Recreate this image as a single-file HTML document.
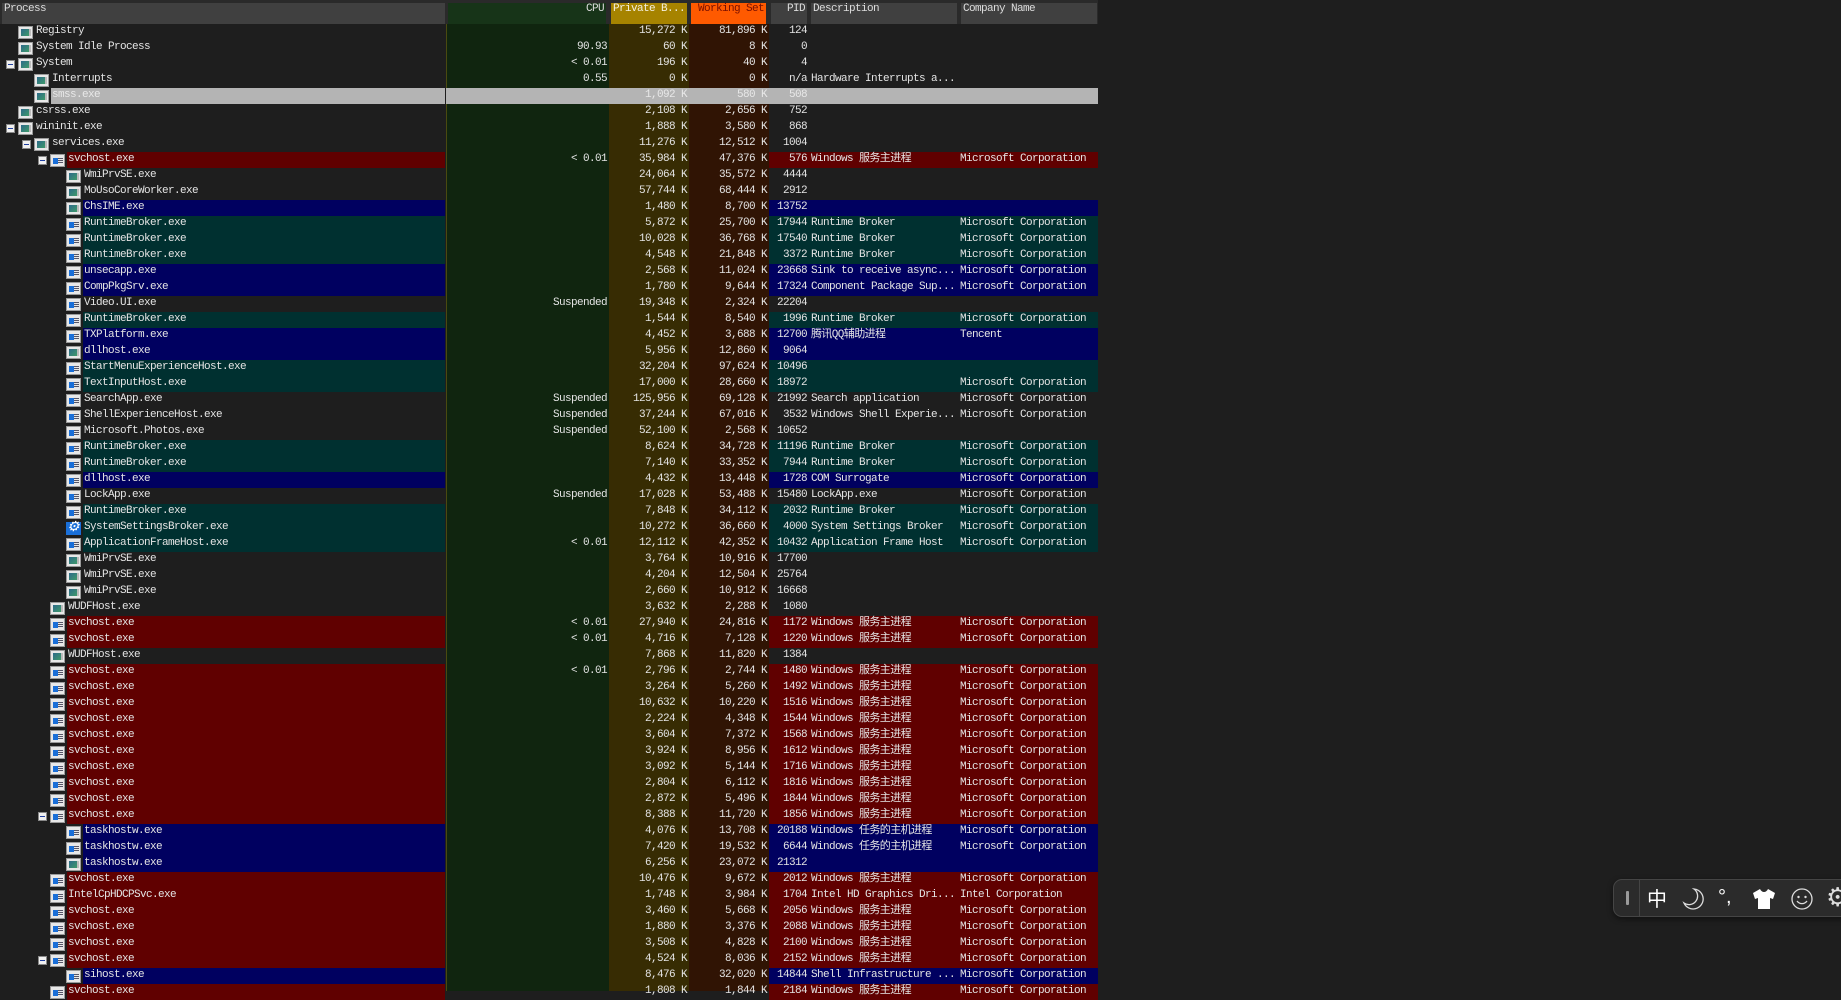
<!DOCTYPE html>
<html><head><meta charset="utf-8">
<style>
*{margin:0;padding:0;box-sizing:border-box}
body{width:1841px;height:991px;background:#1e1e1e;overflow:hidden;position:relative;font-family:"Liberation Mono","Noto Sans CJK SC",monospace;font-size:11px;letter-spacing:-0.6px;color:#e4e4e4}
.col{position:absolute;top:24px;height:967px}
.h{position:absolute;top:3px;height:21px;background:#404040;line-height:11px;padding:1px 2px;color:#ddd;white-space:nowrap;overflow:hidden}
.r{position:absolute;left:0;width:1098px;height:16px;line-height:14px;white-space:nowrap}
.r span{position:absolute;top:0;height:16px}
.p{right:653px}
.d0 .p{left:35px}.d1 .p{left:51px}.d2 .p{left:67px}.d3 .p{left:83px}
.p{padding-left:1px}
.ic{position:absolute;left:-17px;top:2px;width:15px;height:13px;background:#e8e8e8;border:1px solid #9a9a9a}
.ic::after{content:"";position:absolute;left:2px;top:2px;width:8px;height:7px;background:linear-gradient(135deg,#2d6a8a,#3f9a6a)}
.ic::before{content:"";position:absolute;right:1px;top:2px;width:2px;height:7px;background:#bbb}
.w::after{left:2px;top:3px;width:5px;height:6px;background:#1a6fd8}
.w::before{right:1px;top:3px;width:5px;height:6px;background:repeating-linear-gradient(#556 0 1px,transparent 1px 2px)}
.g{background:#1a6fd8;border-color:#1a6fd8}
.g::after{content:"⚙";background:none;color:#fff;left:0;top:-2px;font-size:14px;width:auto;height:auto;letter-spacing:0}
.g::before{display:none}
.ex{position:absolute;left:-29px;top:4px;width:9px;height:9px;background:#f0f0f0;border:1px solid #888}
.ex::after{content:"";position:absolute;left:1px;top:3px;width:5px;height:1px;background:#2040a0}
.c{left:447px;width:160px;text-align:right}
.pb{left:609px;width:78px;text-align:right}
.ws{left:689px;width:78px;text-align:right}
.pid{left:769px;width:38px;text-align:right}
.ds{left:811px}
.co{left:960px}
.red .p,.red .x{background:#600000}
.blue .p,.blue .x{background:#000060}
.teal .p,.teal .x{background:#003030}
.x{position:absolute;left:769px;width:329px;height:16px;top:0}
.sel .p,.sel .x{background:#b4b4b4}
.sel .x{left:446px;width:652px}
.sel{color:#e8e8e8}
</style></head><body>
<div class="col" style="left:446px;width:1px;background:#4a4a10"></div>
<div class="col" style="left:447px;width:162px;background:#10250f"></div>
<div class="col" style="left:609px;width:80px;background:#372c03"></div>
<div class="col" style="left:689px;width:80px;background:#301404"></div>
<div style="position:absolute;left:0;top:0;width:1098px;height:24px;background:#2a2a2a"></div>
<div class="h" style="left:2px;width:443px">Process</div>
<div class="h" style="left:448px;width:158px;background:#173418;text-align:right">CPU</div>
<div class="h" style="left:611px;width:76px;background:#a68300;color:#f4f0e0">Private B...</div>
<div class="h" style="left:691px;width:75px;background:#ff5a00;color:#7a1000;text-align:right">Working Set</div>
<div class="h" style="left:771px;width:36px;text-align:right">PID</div>
<div class="h" style="left:811px;width:146px">Description</div>
<div class="h" style="left:961px;width:136px">Company Name</div>

<div class="r d0" style="top:24px"><span class="p"><i class="ic"></i>Registry</span><span class="pb">15,272 K</span><span class="ws">81,896 K</span><span class="pid">124</span></div>
<div class="r d0" style="top:40px"><span class="p"><i class="ic"></i>System Idle Process</span><span class="c">90.93</span><span class="pb">60 K</span><span class="ws">8 K</span><span class="pid">0</span></div>
<div class="r d0" style="top:56px"><span class="p"><i class="ex"></i><i class="ic"></i>System</span><span class="c">&lt; 0.01</span><span class="pb">196 K</span><span class="ws">40 K</span><span class="pid">4</span></div>
<div class="r d1" style="top:72px"><span class="p"><i class="ic"></i>Interrupts</span><span class="c">0.55</span><span class="pb">0 K</span><span class="ws">0 K</span><span class="pid">n/a</span><span class="ds">Hardware Interrupts a...</span></div>
<div class="r d1 sel" style="top:88px"><i class="x"></i><span class="p"><i class="ic"></i>smss.exe</span><span class="pb">1,092 K</span><span class="ws">580 K</span><span class="pid">508</span></div>
<div class="r d0" style="top:104px"><span class="p"><i class="ic"></i>csrss.exe</span><span class="pb">2,108 K</span><span class="ws">2,656 K</span><span class="pid">752</span></div>
<div class="r d0" style="top:120px"><span class="p"><i class="ex"></i><i class="ic"></i>wininit.exe</span><span class="pb">1,888 K</span><span class="ws">3,580 K</span><span class="pid">868</span></div>
<div class="r d1" style="top:136px"><span class="p"><i class="ex"></i><i class="ic"></i>services.exe</span><span class="pb">11,276 K</span><span class="ws">12,512 K</span><span class="pid">1004</span></div>
<div class="r d2 red" style="top:152px"><i class="x"></i><span class="p"><i class="ex"></i><i class="ic w"></i>svchost.exe</span><span class="c">&lt; 0.01</span><span class="pb">35,984 K</span><span class="ws">47,376 K</span><span class="pid">576</span><span class="ds">Windows 服务主进程</span><span class="co">Microsoft Corporation</span></div>
<div class="r d3" style="top:168px"><span class="p"><i class="ic"></i>WmiPrvSE.exe</span><span class="pb">24,064 K</span><span class="ws">35,572 K</span><span class="pid">4444</span></div>
<div class="r d3" style="top:184px"><span class="p"><i class="ic"></i>MoUsoCoreWorker.exe</span><span class="pb">57,744 K</span><span class="ws">68,444 K</span><span class="pid">2912</span></div>
<div class="r d3 blue" style="top:200px"><i class="x"></i><span class="p"><i class="ic"></i>ChsIME.exe</span><span class="pb">1,480 K</span><span class="ws">8,700 K</span><span class="pid">13752</span></div>
<div class="r d3 teal" style="top:216px"><i class="x"></i><span class="p"><i class="ic w"></i>RuntimeBroker.exe</span><span class="pb">5,872 K</span><span class="ws">25,700 K</span><span class="pid">17944</span><span class="ds">Runtime Broker</span><span class="co">Microsoft Corporation</span></div>
<div class="r d3 teal" style="top:232px"><i class="x"></i><span class="p"><i class="ic w"></i>RuntimeBroker.exe</span><span class="pb">10,028 K</span><span class="ws">36,768 K</span><span class="pid">17540</span><span class="ds">Runtime Broker</span><span class="co">Microsoft Corporation</span></div>
<div class="r d3 teal" style="top:248px"><i class="x"></i><span class="p"><i class="ic w"></i>RuntimeBroker.exe</span><span class="pb">4,548 K</span><span class="ws">21,848 K</span><span class="pid">3372</span><span class="ds">Runtime Broker</span><span class="co">Microsoft Corporation</span></div>
<div class="r d3 blue" style="top:264px"><i class="x"></i><span class="p"><i class="ic w"></i>unsecapp.exe</span><span class="pb">2,568 K</span><span class="ws">11,024 K</span><span class="pid">23668</span><span class="ds">Sink to receive async...</span><span class="co">Microsoft Corporation</span></div>
<div class="r d3 blue" style="top:280px"><i class="x"></i><span class="p"><i class="ic w"></i>CompPkgSrv.exe</span><span class="pb">1,780 K</span><span class="ws">9,644 K</span><span class="pid">17324</span><span class="ds">Component Package Sup...</span><span class="co">Microsoft Corporation</span></div>
<div class="r d3" style="top:296px"><span class="p"><i class="ic w"></i>Video.UI.exe</span><span class="c">Suspended</span><span class="pb">19,348 K</span><span class="ws">2,324 K</span><span class="pid">22204</span></div>
<div class="r d3 teal" style="top:312px"><i class="x"></i><span class="p"><i class="ic w"></i>RuntimeBroker.exe</span><span class="pb">1,544 K</span><span class="ws">8,540 K</span><span class="pid">1996</span><span class="ds">Runtime Broker</span><span class="co">Microsoft Corporation</span></div>
<div class="r d3 blue" style="top:328px"><i class="x"></i><span class="p"><i class="ic w"></i>TXPlatform.exe</span><span class="pb">4,452 K</span><span class="ws">3,688 K</span><span class="pid">12700</span><span class="ds">腾讯QQ辅助进程</span><span class="co">Tencent</span></div>
<div class="r d3 blue" style="top:344px"><i class="x"></i><span class="p"><i class="ic"></i>dllhost.exe</span><span class="pb">5,956 K</span><span class="ws">12,860 K</span><span class="pid">9064</span></div>
<div class="r d3 teal" style="top:360px"><i class="x"></i><span class="p"><i class="ic w"></i>StartMenuExperienceHost.exe</span><span class="pb">32,204 K</span><span class="ws">97,624 K</span><span class="pid">10496</span></div>
<div class="r d3 teal" style="top:376px"><i class="x"></i><span class="p"><i class="ic w"></i>TextInputHost.exe</span><span class="pb">17,000 K</span><span class="ws">28,660 K</span><span class="pid">18972</span><span class="co">Microsoft Corporation</span></div>
<div class="r d3" style="top:392px"><span class="p"><i class="ic w"></i>SearchApp.exe</span><span class="c">Suspended</span><span class="pb">125,956 K</span><span class="ws">69,128 K</span><span class="pid">21992</span><span class="ds">Search application</span><span class="co">Microsoft Corporation</span></div>
<div class="r d3" style="top:408px"><span class="p"><i class="ic w"></i>ShellExperienceHost.exe</span><span class="c">Suspended</span><span class="pb">37,244 K</span><span class="ws">67,016 K</span><span class="pid">3532</span><span class="ds">Windows Shell Experie...</span><span class="co">Microsoft Corporation</span></div>
<div class="r d3" style="top:424px"><span class="p"><i class="ic w"></i>Microsoft.Photos.exe</span><span class="c">Suspended</span><span class="pb">52,100 K</span><span class="ws">2,568 K</span><span class="pid">10652</span></div>
<div class="r d3 teal" style="top:440px"><i class="x"></i><span class="p"><i class="ic w"></i>RuntimeBroker.exe</span><span class="pb">8,624 K</span><span class="ws">34,728 K</span><span class="pid">11196</span><span class="ds">Runtime Broker</span><span class="co">Microsoft Corporation</span></div>
<div class="r d3 teal" style="top:456px"><i class="x"></i><span class="p"><i class="ic w"></i>RuntimeBroker.exe</span><span class="pb">7,140 K</span><span class="ws">33,352 K</span><span class="pid">7944</span><span class="ds">Runtime Broker</span><span class="co">Microsoft Corporation</span></div>
<div class="r d3 blue" style="top:472px"><i class="x"></i><span class="p"><i class="ic w"></i>dllhost.exe</span><span class="pb">4,432 K</span><span class="ws">13,448 K</span><span class="pid">1728</span><span class="ds">COM Surrogate</span><span class="co">Microsoft Corporation</span></div>
<div class="r d3" style="top:488px"><span class="p"><i class="ic w"></i>LockApp.exe</span><span class="c">Suspended</span><span class="pb">17,028 K</span><span class="ws">53,488 K</span><span class="pid">15480</span><span class="ds">LockApp.exe</span><span class="co">Microsoft Corporation</span></div>
<div class="r d3 teal" style="top:504px"><i class="x"></i><span class="p"><i class="ic w"></i>RuntimeBroker.exe</span><span class="pb">7,848 K</span><span class="ws">34,112 K</span><span class="pid">2032</span><span class="ds">Runtime Broker</span><span class="co">Microsoft Corporation</span></div>
<div class="r d3 teal" style="top:520px"><i class="x"></i><span class="p"><i class="ic g"></i>SystemSettingsBroker.exe</span><span class="pb">10,272 K</span><span class="ws">36,660 K</span><span class="pid">4000</span><span class="ds">System Settings Broker</span><span class="co">Microsoft Corporation</span></div>
<div class="r d3 teal" style="top:536px"><i class="x"></i><span class="p"><i class="ic w"></i>ApplicationFrameHost.exe</span><span class="c">&lt; 0.01</span><span class="pb">12,112 K</span><span class="ws">42,352 K</span><span class="pid">10432</span><span class="ds">Application Frame Host</span><span class="co">Microsoft Corporation</span></div>
<div class="r d3" style="top:552px"><span class="p"><i class="ic"></i>WmiPrvSE.exe</span><span class="pb">3,764 K</span><span class="ws">10,916 K</span><span class="pid">17700</span></div>
<div class="r d3" style="top:568px"><span class="p"><i class="ic"></i>WmiPrvSE.exe</span><span class="pb">4,204 K</span><span class="ws">12,504 K</span><span class="pid">25764</span></div>
<div class="r d3" style="top:584px"><span class="p"><i class="ic"></i>WmiPrvSE.exe</span><span class="pb">2,660 K</span><span class="ws">10,912 K</span><span class="pid">16668</span></div>
<div class="r d2" style="top:600px"><span class="p"><i class="ic"></i>WUDFHost.exe</span><span class="pb">3,632 K</span><span class="ws">2,288 K</span><span class="pid">1080</span></div>
<div class="r d2 red" style="top:616px"><i class="x"></i><span class="p"><i class="ic w"></i>svchost.exe</span><span class="c">&lt; 0.01</span><span class="pb">27,940 K</span><span class="ws">24,816 K</span><span class="pid">1172</span><span class="ds">Windows 服务主进程</span><span class="co">Microsoft Corporation</span></div>
<div class="r d2 red" style="top:632px"><i class="x"></i><span class="p"><i class="ic w"></i>svchost.exe</span><span class="c">&lt; 0.01</span><span class="pb">4,716 K</span><span class="ws">7,128 K</span><span class="pid">1220</span><span class="ds">Windows 服务主进程</span><span class="co">Microsoft Corporation</span></div>
<div class="r d2" style="top:648px"><span class="p"><i class="ic"></i>WUDFHost.exe</span><span class="pb">7,868 K</span><span class="ws">11,820 K</span><span class="pid">1384</span></div>
<div class="r d2 red" style="top:664px"><i class="x"></i><span class="p"><i class="ic w"></i>svchost.exe</span><span class="c">&lt; 0.01</span><span class="pb">2,796 K</span><span class="ws">2,744 K</span><span class="pid">1480</span><span class="ds">Windows 服务主进程</span><span class="co">Microsoft Corporation</span></div>
<div class="r d2 red" style="top:680px"><i class="x"></i><span class="p"><i class="ic w"></i>svchost.exe</span><span class="pb">3,264 K</span><span class="ws">5,260 K</span><span class="pid">1492</span><span class="ds">Windows 服务主进程</span><span class="co">Microsoft Corporation</span></div>
<div class="r d2 red" style="top:696px"><i class="x"></i><span class="p"><i class="ic w"></i>svchost.exe</span><span class="pb">10,632 K</span><span class="ws">10,220 K</span><span class="pid">1516</span><span class="ds">Windows 服务主进程</span><span class="co">Microsoft Corporation</span></div>
<div class="r d2 red" style="top:712px"><i class="x"></i><span class="p"><i class="ic w"></i>svchost.exe</span><span class="pb">2,224 K</span><span class="ws">4,348 K</span><span class="pid">1544</span><span class="ds">Windows 服务主进程</span><span class="co">Microsoft Corporation</span></div>
<div class="r d2 red" style="top:728px"><i class="x"></i><span class="p"><i class="ic w"></i>svchost.exe</span><span class="pb">3,604 K</span><span class="ws">7,372 K</span><span class="pid">1568</span><span class="ds">Windows 服务主进程</span><span class="co">Microsoft Corporation</span></div>
<div class="r d2 red" style="top:744px"><i class="x"></i><span class="p"><i class="ic w"></i>svchost.exe</span><span class="pb">3,924 K</span><span class="ws">8,956 K</span><span class="pid">1612</span><span class="ds">Windows 服务主进程</span><span class="co">Microsoft Corporation</span></div>
<div class="r d2 red" style="top:760px"><i class="x"></i><span class="p"><i class="ic w"></i>svchost.exe</span><span class="pb">3,092 K</span><span class="ws">5,144 K</span><span class="pid">1716</span><span class="ds">Windows 服务主进程</span><span class="co">Microsoft Corporation</span></div>
<div class="r d2 red" style="top:776px"><i class="x"></i><span class="p"><i class="ic w"></i>svchost.exe</span><span class="pb">2,804 K</span><span class="ws">6,112 K</span><span class="pid">1816</span><span class="ds">Windows 服务主进程</span><span class="co">Microsoft Corporation</span></div>
<div class="r d2 red" style="top:792px"><i class="x"></i><span class="p"><i class="ic w"></i>svchost.exe</span><span class="pb">2,872 K</span><span class="ws">5,496 K</span><span class="pid">1844</span><span class="ds">Windows 服务主进程</span><span class="co">Microsoft Corporation</span></div>
<div class="r d2 red" style="top:808px"><i class="x"></i><span class="p"><i class="ex"></i><i class="ic w"></i>svchost.exe</span><span class="pb">8,388 K</span><span class="ws">11,720 K</span><span class="pid">1856</span><span class="ds">Windows 服务主进程</span><span class="co">Microsoft Corporation</span></div>
<div class="r d3 blue" style="top:824px"><i class="x"></i><span class="p"><i class="ic w"></i>taskhostw.exe</span><span class="pb">4,076 K</span><span class="ws">13,708 K</span><span class="pid">20188</span><span class="ds">Windows 任务的主机进程</span><span class="co">Microsoft Corporation</span></div>
<div class="r d3 blue" style="top:840px"><i class="x"></i><span class="p"><i class="ic w"></i>taskhostw.exe</span><span class="pb">7,420 K</span><span class="ws">19,532 K</span><span class="pid">6644</span><span class="ds">Windows 任务的主机进程</span><span class="co">Microsoft Corporation</span></div>
<div class="r d3 blue" style="top:856px"><i class="x"></i><span class="p"><i class="ic"></i>taskhostw.exe</span><span class="pb">6,256 K</span><span class="ws">23,072 K</span><span class="pid">21312</span></div>
<div class="r d2 red" style="top:872px"><i class="x"></i><span class="p"><i class="ic w"></i>svchost.exe</span><span class="pb">10,476 K</span><span class="ws">9,672 K</span><span class="pid">2012</span><span class="ds">Windows 服务主进程</span><span class="co">Microsoft Corporation</span></div>
<div class="r d2 red" style="top:888px"><i class="x"></i><span class="p"><i class="ic w"></i>IntelCpHDCPSvc.exe</span><span class="pb">1,748 K</span><span class="ws">3,984 K</span><span class="pid">1704</span><span class="ds">Intel HD Graphics Dri...</span><span class="co">Intel Corporation</span></div>
<div class="r d2 red" style="top:904px"><i class="x"></i><span class="p"><i class="ic w"></i>svchost.exe</span><span class="pb">3,460 K</span><span class="ws">5,668 K</span><span class="pid">2056</span><span class="ds">Windows 服务主进程</span><span class="co">Microsoft Corporation</span></div>
<div class="r d2 red" style="top:920px"><i class="x"></i><span class="p"><i class="ic w"></i>svchost.exe</span><span class="pb">1,880 K</span><span class="ws">3,376 K</span><span class="pid">2088</span><span class="ds">Windows 服务主进程</span><span class="co">Microsoft Corporation</span></div>
<div class="r d2 red" style="top:936px"><i class="x"></i><span class="p"><i class="ic w"></i>svchost.exe</span><span class="pb">3,508 K</span><span class="ws">4,828 K</span><span class="pid">2100</span><span class="ds">Windows 服务主进程</span><span class="co">Microsoft Corporation</span></div>
<div class="r d2 red" style="top:952px"><i class="x"></i><span class="p"><i class="ex"></i><i class="ic w"></i>svchost.exe</span><span class="pb">4,524 K</span><span class="ws">8,036 K</span><span class="pid">2152</span><span class="ds">Windows 服务主进程</span><span class="co">Microsoft Corporation</span></div>
<div class="r d3 blue" style="top:968px"><i class="x"></i><span class="p"><i class="ic w"></i>sihost.exe</span><span class="pb">8,476 K</span><span class="ws">32,020 K</span><span class="pid">14844</span><span class="ds">Shell Infrastructure ...</span><span class="co">Microsoft Corporation</span></div>
<div class="r d2 red" style="top:984px"><i class="x"></i><span class="p"><i class="ic w"></i>svchost.exe</span><span class="pb">1,808 K</span><span class="ws">1,844 K</span><span class="pid">2184</span><span class="ds">Windows 服务主进程</span><span class="co">Microsoft Corporation</span></div>

<div style="position:absolute;left:1613px;top:879px;width:240px;height:38px;background:#2b2b2b;border:1px solid #454545;border-radius:9px;box-shadow:0 2px 6px rgba(0,0,0,.5)">
 <div style="position:absolute;left:12px;top:11px;width:3px;height:14px;background:#9a9a9a;border-radius:1px"></div>
 <div style="position:absolute;left:25px;top:0;width:1px;height:36px;background:#454545"></div>
 <div style="position:absolute;left:33px;top:5px;color:#fff;font-family:'Noto Sans CJK SC',sans-serif;font-size:20px;letter-spacing:0;line-height:26px">中</div>
 <svg style="position:absolute;left:68px;top:7px" width="24" height="24" viewBox="0 0 24 24"><path d="M12 2a10 10 0 1 1-10 14A8 8 0 0 0 12 2z" fill="none" stroke="#ddd" stroke-width="1.3"/></svg>
 <div style="position:absolute;left:104px;top:4px;color:#fff;font-size:20px;letter-spacing:0;line-height:26px;font-family:'Liberation Sans',sans-serif">°,</div>
 <svg style="position:absolute;left:138px;top:8px" width="24" height="22" viewBox="0 0 24 22"><path d="M8 1L1 5l2 6 3-1v11h12V10l3 1 2-6-7-4c-1 2-2.5 3-4 3s-3-1-4-3z" fill="#fff"/></svg>
 <svg style="position:absolute;left:176px;top:7px" width="24" height="24" viewBox="0 0 24 24"><circle cx="12" cy="12" r="10" fill="none" stroke="#ddd" stroke-width="1.3"/><circle cx="8.5" cy="10" r="1.2" fill="#ddd"/><circle cx="15.5" cy="10" r="1.2" fill="#ddd"/><path d="M7 14c2.5 3.5 7.5 3.5 10 0" fill="none" stroke="#ddd" stroke-width="1.3"/></svg>
 <div style="position:absolute;left:212px;top:3px;color:#ddd;font-size:26px;letter-spacing:0;line-height:30px;font-family:'DejaVu Sans',sans-serif">⚙</div>
</div>
</body></html>
